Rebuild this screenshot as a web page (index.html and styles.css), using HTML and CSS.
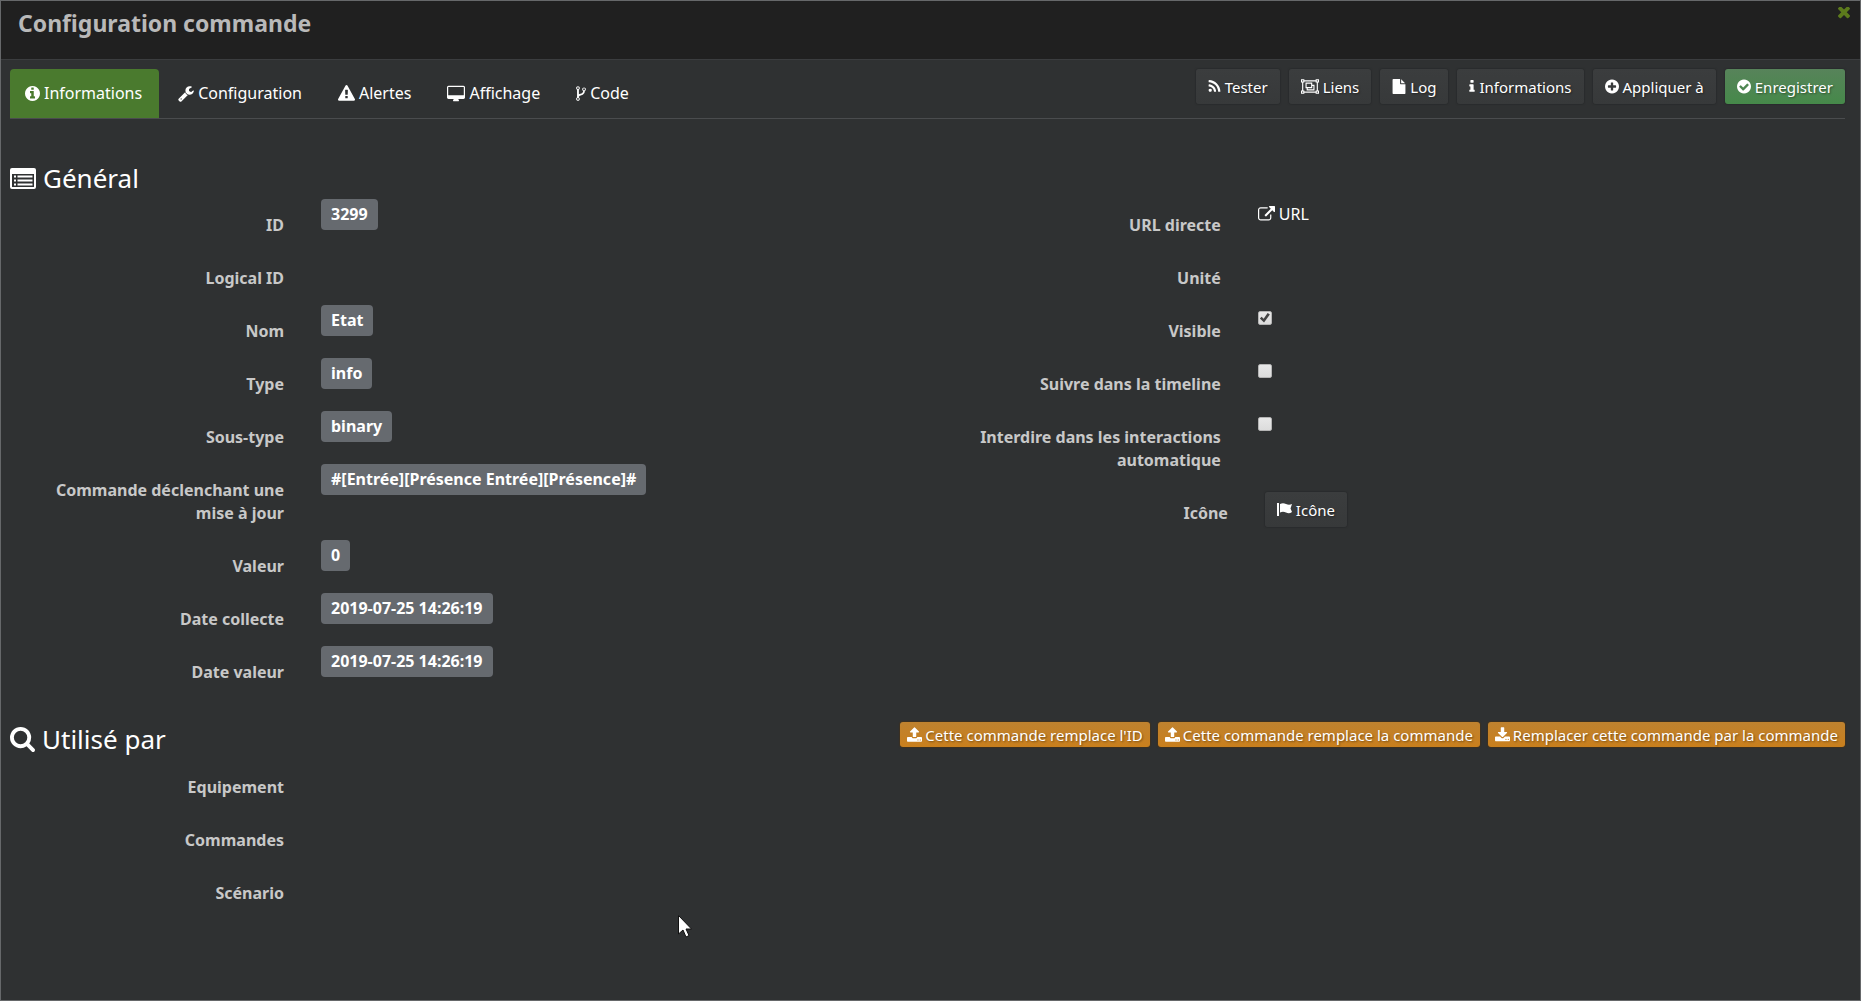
FILE: index.html
```html
<!DOCTYPE html>
<html lang="fr">
<head>
<meta charset="utf-8">
<meta name="viewport" content="width=device-width, initial-scale=1">
<title>Configuration commande</title>
<link rel="stylesheet" href="styles.css">
</head>
<body>
<svg class="sprite" aria-hidden="true">
  <symbol id="i-info-circle" viewBox="128 128 1536 1536"><path d="M1152 1376v-160q0-14-9-23t-23-9h-96v-512q0-14-9-23t-23-9h-320q-14 0-23 9t-9 23v160q0 14 9 23t23 9h96v320h-96q-14 0-23 9t-9 23v160q0 14 9 23t23 9h448q14 0 23-9t9-23zm-128-896v-160q0-14-9-23t-23-9h-192q-14 0-23 9t-9 23v160q0 14 9 23t23 9h192q14 0 23-9t9-23zm640 416q0 209-103 385.5t-279.5 279.5-385.5 103-385.5-103-279.5-279.5-103-385.5 103-385.5 279.5-279.5 385.5-103 385.5 103 279.5 279.5 103 385.5z"/></symbol>
  <symbol id="i-wrench" viewBox="64 0 1664 1792"><path d="M448 1472q0-26-19-45t-45-19-45 19-19 45 19 45 45 19 45-19 19-45zm644-420l-682 682q-37 37-90 37-52 0-91-37l-106-108q-38-36-38-90 0-53 38-91l681-681q39 98 114.5 173.5t173.5 114.5zm634-435q0 39-23 106-47 134-164.5 217.5t-258.5 83.5q-185 0-316.5-131.5t-131.5-316.5 131.5-316.5 316.5-131.5q58 0 121.5 16.5t107.5 46.5q16 11 16 28t-16 28l-293 169v224l193 107q5-3 79-48.5t135.5-81 70.5-35.5q15 0 23.5 10t8.5 25z"/></symbol>
  <symbol id="i-warning" viewBox="0 0 1792 1792"><path d="M1024 1375v-190q0-14-9.5-23.5t-22.5-9.5h-192q-13 0-22.5 9.5t-9.5 23.5v190q0 14 9.5 23.5t22.5 9.5h192q13 0 22.5-9.5t9.5-23.5zm-2-374l18-459q0-12-10-19-13-11-24-11h-220q-11 0-24 11-10 7-10 21l17 457q0 10 10 16.5t24 6.5h185q14 0 23.5-6.5t10.5-16.5zm-14-934l768 1408q35 63-2 126-17 29-46.5 46t-63.5 17h-1536q-34 0-63.5-17t-46.5-46q-37-63-2-126l768-1408q17-31 47-49t65-18 65 18 47 49z"/></symbol>
  <symbol id="i-desktop" viewBox="-64 0 1920 1664"><path d="M1728 992v-832q0-13-9.5-22.5t-22.5-9.5h-1600q-13 0-22.5 9.5t-9.5 22.5v832q0 13 9.5 22.5t22.5 9.5h1600q13 0 22.5-9.5t9.5-22.5zm128-832v1088q0 66-47 113t-113 47h-544q0 37 16 77.5t32 71 16 43.5q0 26-19 45t-45 19h-512q-26 0-45-19t-19-45q0-14 16-44t32-70 16-78h-544q-66 0-113-47t-47-113v-1088q0-66 47-113t113-47h1600q66 0 113 47t47 113z"/></symbol>
  <symbol id="i-fork" viewBox="384 0 1024 1792"><path d="M672 1472q0-40-28-68t-68-28-68 28-28 68 28 68 68 28 68-28 28-68zm0-1152q0-40-28-68t-68-28-68 28-28 68 28 68 68 28 68-28 28-68zm640 128q0-40-28-68t-68-28-68 28-28 68 28 68 68 28 68-28 28-68zm96 0q0 52-26 96.5t-70 69.5q-2 287-226 414-67 38-203 81-128 40-169.5 71t-41.5 100v26q44 25 70 69.5t26 96.5q0 80-56 136t-136 56-136-56-56-136q0-52 26-96.5t70-69.5v-820q-44-25-70-69.5t-26-96.5q0-80 56-136t136-56 136 56 56 136q0 52-26 96.5t-70 69.5v497q54-26 154-57 55-17 87.5-29.5t70.5-31 59-39.5 40.5-51 28-69.5 8.5-91.5q-44-25-70-69.5t-26-96.5q0-80 56-136t136-56 136 56 56 136z"/></symbol>
  <symbol id="i-rss" viewBox="192 0 1408 1792"><path d="M576 1344q0 80-56 136t-136 56-136-56-56-136 56-136 136-56 136 56 56 136zm512 123q2 28-17 48-18 21-47 21h-135q-25 0-43-16.5t-20-41.5q-22-229-184.5-391.5t-391.5-184.5q-25-2-41.5-20t-16.5-43v-135q0-29 21-47 17-17 43-17h5q160 13 306 80.5t259 181.5q114 113 181.5 259t80.5 306zm512 2q2 27-18 47-18 20-46 20h-143q-26 0-44.5-17.5t-19.5-42.5q-12-215-101-408.5t-231.5-336-336-231.5-408.5-102q-25-1-42.5-19.5t-17.5-43.5v-143q0-28 20-46 18-18 44-18h3q262 13 501.5 120t425.5 294q187 186 294 425.5t120 501.5z"/></symbol>
  <symbol id="i-group" viewBox="0 128 2048 1664"><path fill-rule="evenodd" d="M0 128h384v128h1280v-128h384v384h-128v896h128v384h-384v-128h-1280v128h-384v-384h128v-896h-128zM384 384v128h-128v896h128v128h1280v-128h128v-896h-128v-128zM128 256v128h128v-128zM1792 256v128h128v-128zM128 1536v128h128v-128zM1792 1536v128h128v-128zM512 512h768v256h256v640h-896v-256h-128zM640 640v384h512v-384zM1280 896v256h-512v128h640v-384z"/></symbol>
  <symbol id="i-file" viewBox="128 0 1536 1792"><path d="M1152 512v-472q22 14 36 28l408 408q14 14 28 36h-472zm-128 32q0 40 28 68t68 28h544v1056q0 40-28 68t-68 28h-1344q-40 0-68-28t-28-68v-1600q0-40 28-68t68-28h800v544z"/></symbol>
  <symbol id="i-info" viewBox="576 0 640 1792"><path d="M1216 1344v128q0 26-19 45t-45 19h-512q-26 0-45-19t-19-45v-128q0-26 19-45t45-19h64v-384h-64q-26 0-45-19t-19-45v-128q0-26 19-45t45-19h384q26 0 45 19t19 45v576h64q26 0 45 19t19 45zm-128-1152v192q0 26-19 45t-45 19h-256q-26 0-45-19t-19-45v-192q0-26 19-45t45-19h256q26 0 45 19t19 45z"/></symbol>
  <symbol id="i-plus-circle" viewBox="128 128 1536 1536"><path d="M1344 960v-128q0-26-19-45t-45-19h-256v-256q0-26-19-45t-45-19h-128q-26 0-45 19t-19 45v256h-256q-26 0-45 19t-19 45v128q0 26 19 45t45 19h256v256q0 26 19 45t45 19h128q26 0 45-19t19-45v-256h256q26 0 45-19t19-45zm320-64q0 209-103 385.5t-279.5 279.5-385.5 103-385.5-103-279.5-279.5-103-385.5 103-385.5 279.5-279.5 385.5-103 385.5 103 279.5 279.5 103 385.5z"/></symbol>
  <symbol id="i-check-circle" viewBox="128 128 1536 1536"><path d="M1412 734q0-28-18-46l-91-90q-19-19-45-19t-45 19l-408 407-226-226q-19-19-45-19t-45 19l-91 90q-18 18-18 46 0 27 18 45l362 362q19 19 45 19 27 0 46-19l543-543q18-18 18-45zm252 162q0 209-103 385.5t-279.5 279.5-385.5 103-385.5-103-279.5-279.5-103-385.5 103-385.5 279.5-279.5 385.5-103 385.5 103 279.5 279.5 103 385.5z"/></symbol>
  <symbol id="i-times" viewBox="302 434 1188 1188"><path d="M1490 1322q0 40-28 68l-136 136q-28 28-68 28t-68-28l-294-294-294 294q-28 28-68 28t-68-28l-136-136q-28-28-28-68t28-68l294-294-294-294q-28-28-28-68t28-68l136-136q28-28 68-28t68 28l294 294 294-294q28-28 68-28t68 28l136 136q28 28 28 68t-28 68l-294 294 294 294q28 28 28 68z"/></symbol>
  <symbol id="i-search" viewBox="64 128 1664 1664"><path d="M1216 832q0-185-131.5-316.5t-316.5-131.5-316.5 131.5-131.5 316.5 131.5 316.5 316.5 131.5 316.5-131.5 131.5-316.5zm512 832q0 52-38 90t-90 38q-54 0-90-38l-343-342q-179 124-399 124-143 0-273.5-55.5t-225-150-150-225-55.5-273.5 55.5-273.5 150-225 225-150 273.5-55.5 273.5 55.5 225 150 150 225 55.5 273.5q0 220-124 399l343 343q37 37 37 90z"/></symbol>
  <symbol id="i-external" viewBox="0 0 1792 1792"><path d="M1408 928v320q0 119-84.5 203.5t-203.5 84.5h-832q-119 0-203.5-84.5t-84.5-203.5v-832q0-119 84.5-203.5t203.5-84.5h704q14 0 23 9t9 23v64q0 14-9 23t-23 9h-704q-66 0-113 47t-47 113v832q0 66 47 113t113 47h832q66 0 113-47t47-113v-320q0-14 9-23t23-9h64q14 0 23 9t9 23zm384-864v512q0 26-19 45t-45 19-45-19l-176-176-652 652q-10 10-23 10t-23-10l-114-114q-10-10-10-23t10-23l652-652-176-176q-19-19-19-45t19-45 45-19h512q26 0 45 19t19 45z"/></symbol>
  <symbol id="i-upload" viewBox="64 64 1664 1600"><path d="M1344 1472q0-26-19-45t-45-19-45 19-19 45 19 45 45 19 45-19 19-45zm256 0q0-26-19-45t-45-19-45 19-19 45 19 45 45 19 45-19 19-45zm128-224v320q0 40-28 68t-68 28h-1472q-40 0-68-28t-28-68v-320q0-40 28-68t68-28h427q21 56 70.5 92t110.5 36h256q61 0 110.5-36t70.5-92h427q40 0 68 28t28 68zm-325-648q-17 40-59 40h-256v448q0 26-19 45t-45 19h-256q-26 0-45-19t-19-45v-448h-256q-42 0-59-40-17-39 14-69l448-448q18-19 45-19t45 19l448 448q31 30 14 69z"/></symbol>
  <symbol id="i-download" viewBox="64 0 1664 1600"><path d="M1344 1344q0-26-19-45t-45-19-45 19-19 45 19 45 45 19 45-19 19-45zm256 0q0-26-19-45t-45-19-45 19-19 45 19 45 45 19 45-19 19-45zm128-224v320q0 40-28 68t-68 28h-1472q-40 0-68-28t-28-68v-320q0-40 28-68t68-28h465l135 136q58 56 136 56t136-56l136-136h464q40 0 68 28t28 68zm-325-569q17 41-14 70l-448 448q-18 19-45 19t-45-19l-448-448q-31-29-14-70 17-39 59-39h256v-448q0-26 19-45t45-19h256q26 0 45 19t19 45v448h256q42 0 59 39z"/></symbol>
  <symbol id="i-flag" viewBox="0 0 15 15"><path d="M0 1h2v13H0zM3 2c2-1 4-1 6 0s4 1 6 0l-1.500 4.500L15 10c-2 1.500-4 1.500-6 .500s-4-1-6 0z"/></symbol>
  <symbol id="i-list" viewBox="0 0 26 21"><path fill-rule="evenodd" d="M2 0h22q2 0 2 2v17q0 2-2 2H2q-2 0-2-2V2q0-2 2-2zM2 6v12.500q0 .500.500.500h21q.500 0 .500-.500V6zM4 7.500h2v2H4zM7.500 7.500h15v2h-15zM4 11.500h2v2H4zM7.500 11.500h15v2h-15zM4 15.500h2v2H4zM7.500 15.500h15v2h-15z"/></symbol>
</svg>

<main class="dialog">
  <header class="titlebar">
    <h1 class="title">Configuration commande</h1>
    <button class="close" type="button" aria-label="Fermer"><svg><use href="#i-times"/></svg></button>
  </header>

  <div class="content">
    <div class="toolbar">
      <nav class="tabs">
        <a class="tab tab-active" href="#informations"><svg class="icon w15"><use href="#i-info-circle"/></svg>Informations</a>
        <a class="tab" href="#configuration"><svg class="icon w16"><use href="#i-wrench"/></svg>Configuration</a>
        <a class="tab" href="#alertes"><svg class="icon w17"><use href="#i-warning"/></svg>Alertes</a>
        <a class="tab" href="#affichage"><svg class="icon w18"><use href="#i-desktop"/></svg>Affichage</a>
        <a class="tab" href="#code"><svg class="icon w10"><use href="#i-fork"/></svg>Code</a>
      </nav>
      <div class="actions">
        <button class="btn" type="button"><svg class="icon w13"><use href="#i-rss"/></svg>Tester</button>
        <button class="btn" type="button"><svg class="icon w18"><use href="#i-group"/></svg>Liens</button>
        <button class="btn" type="button"><svg class="icon w14"><use href="#i-file"/></svg>Log</button>
        <button class="btn" type="button"><svg class="icon w6"><use href="#i-info"/></svg>Informations</button>
        <button class="btn" type="button"><svg class="icon w14"><use href="#i-plus-circle"/></svg>Appliquer à</button>
        <button class="btn btn-success" type="button"><svg class="icon w14"><use href="#i-check-circle"/></svg>Enregistrer</button>
      </div>
    </div>

    <section id="informations">
      <h2 class="legend legend-general"><svg class="legend-icon"><use href="#i-list"/></svg>Général</h2>
      <div class="columns">
        <div>
          <div class="row"><span class="label">ID</span><span class="badge">3299</span></div>
          <div class="row"><span class="label">Logical ID</span></div>
          <div class="row"><span class="label">Nom</span><span class="badge">Etat</span></div>
          <div class="row"><span class="label">Type</span><span class="badge">info</span></div>
          <div class="row"><span class="label">Sous-type</span><span class="badge">binary</span></div>
          <div class="row"><span class="label">Commande déclenchant une mise à jour</span><span class="badge">#[Entrée][Présence Entrée][Présence]#</span></div>
          <div class="row"><span class="label">Valeur</span><span class="badge">0</span></div>
          <div class="row"><span class="label">Date collecte</span><span class="badge">2019-07-25 14:26:19</span></div>
          <div class="row"><span class="label">Date valeur</span><span class="badge">2019-07-25 14:26:19</span></div>
        </div>
        <div>
          <div class="row"><span class="label">URL directe</span><a class="link" href="#url"><svg class="icon w17"><use href="#i-external"/></svg>URL</a></div>
          <div class="row"><span class="label">Unité</span></div>
          <div class="row"><label class="label" for="visible">Visible</label><input class="check" type="checkbox" id="visible" checked></div>
          <div class="row"><label class="label" for="timeline">Suivre dans la timeline</label><input class="check" type="checkbox" id="timeline"></div>
          <div class="row"><label class="label" for="interact">Interdire dans les interactions automatique</label><input class="check" type="checkbox" id="interact"></div>
          <div class="row row-icon"><span class="label">Icône</span><button class="btn" type="button"><svg class="icon w15"><use href="#i-flag"/></svg>Icône</button></div>
        </div>
      </div>
    </section>

    <section>
      <div class="used-head">
        <h2 class="legend"><svg class="legend-icon search"><use href="#i-search"/></svg>Utilisé par</h2>
        <div class="replace">
          <button class="btn btn-warning" type="button"><svg class="icon w15"><use href="#i-upload"/></svg>Cette commande remplace l'ID</button>
          <button class="btn btn-warning" type="button"><svg class="icon w15"><use href="#i-upload"/></svg>Cette commande remplace la commande</button>
          <button class="btn btn-warning" type="button"><svg class="icon w15"><use href="#i-download"/></svg>Remplacer cette commande par la commande</button>
        </div>
      </div>
      <div class="row"><span class="label">Equipement</span></div>
      <div class="row"><span class="label">Commandes</span></div>
      <div class="row"><span class="label">Scénario</span></div>
    </section>
  </div>
</main>
<svg class="cursor" viewBox="0 0 14 23" aria-hidden="true"><path d="M.500.500v18.500l4.500-4 3 7 3-1.500-3-6.500h5.500z" fill="#fff" stroke="#111"/></svg>
</body>
</html>
```
FILE: styles.css
```css
* {
  box-sizing: border-box;
}

body {
  margin: 0;
  background: #2f3132;
  color: #fff;
  font-family: "Noto Sans", "Open Sans", sans-serif;
  font-size: 16px;
  line-height: 23px;
}

.sprite {
  display: none;
}

.dialog {
  min-height: 100vh;
  border: 1px solid #66686a;
}

.titlebar {
  display: flex;
  justify-content: space-between;
  align-items: flex-start;
  height: 59px;
  padding: 6px 10px 0 17px;
  background: #202020;
  border-bottom: 1px solid #3b3d3f;
}

.title {
  margin: 0;
  font-size: 23px;
  line-height: 32px;
  font-weight: 700;
  color: #b9b9b9;
}

.close {
  display: flex;
  padding: 0;
  border: 0;
  background: none;
}

.close svg {
  width: 12px;
  height: 12px;
  fill: #5c7a1c;
}

.content {
  padding: 9px 15px 0 9px;
}

.toolbar {
  display: flex;
  justify-content: space-between;
  align-items: flex-start;
  border-bottom: 1px solid #4a4c4e;
}

.tabs {
  display: flex;
  gap: 4px;
}

.tab {
  display: flex;
  align-items: center;
  gap: 4px;
  height: 49px;
  padding: 0 17px 0 15px;
  color: #fff;
  text-decoration: none;
}

.tab-active {
  background: #4a7a2e;
  border-radius: 4px 4px 0 0;
}

.icon {
  height: 17px;
  fill: currentColor;
  flex: none;
}

.btn .icon {
  height: 15px;
}

.w6 { width: 6px; }
.w10 { width: 10px; }
.w13 { width: 13px; }
.w14 { width: 14px; }
.w15 { width: 15px; }
.w16 { width: 16px; }
.w17 { width: 17px; }
.w18 { width: 18px; }

.actions {
  display: flex;
  gap: 9px;
}

.replace {
  display: flex;
  gap: 8px;
}

.btn {
  display: flex;
  align-items: center;
  gap: 4px;
  height: 35px;
  padding: 0 12px;
  border: 0;
  border-radius: 3px;
  background: linear-gradient(#3b3d3e, #37393a);
  box-shadow: 0 0 1px 1px #2a2c2d;
  color: #fff;
  font-family: inherit;
  font-size: 15px;
  line-height: 22px;
  white-space: nowrap;
  text-shadow: 1px 1px 2px rgba(0, 0, 0, 0.4);
}

.btn-success {
  background: linear-gradient(#57835a, #46894a);
}

.btn-warning {
  gap: 3px;
  height: 25px;
  padding: 0 7px;
  background: linear-gradient(#bf822f, #c97f1d);
  box-shadow: 0 0 1px 1px #3d3120;
}

.legend {
  display: flex;
  align-items: center;
  gap: 7px;
  margin: 0;
  font-size: 26px;
  line-height: 38px;
  font-weight: 400;
}

.legend-general {
  margin: 40px 0 2px;
}

.legend-icon {
  width: 26px;
  height: 21px;
  fill: currentColor;
}

.legend-icon.search {
  width: 25px;
  height: 25px;
}

.columns {
  display: grid;
  grid-template-columns: 51% 1fr;
  column-gap: 1px;
}

.row {
  display: grid;
  grid-template-columns: 274px 1fr;
  column-gap: 37px;
  align-items: start;
  justify-items: start;
}

.row-icon {
  margin-left: 7px;
}

.row-icon .btn {
  margin-top: 5px;
}

.label {
  justify-self: end;
  padding: 15px 0 15px 24px;
  font-weight: 700;
  color: #c8c8c8;
  text-align: right;
}

.badge {
  padding: 4px 10px;
  border-radius: 4px;
  background: #666a6f;
  font-weight: 700;
}

.link {
  display: flex;
  align-items: center;
  gap: 4px;
  padding-top: 4px;
  color: #fff;
  text-decoration: none;
}

.check {
  appearance: none;
  width: 14px;
  height: 14px;
  margin: 6px 0 0;
  border: 1px solid #b4b4b4;
  border-radius: 2px;
  background: linear-gradient(#e8e8e8, #dcdcdc);
  display: grid;
  place-items: center;
}

.check:checked::before {
  content: "";
  width: 10px;
  height: 10px;
  background: #444;
  clip-path: polygon(0 55%, 18% 38%, 38% 58%, 78% 0, 100% 14%, 42% 96%);
}

.used-head {
  display: flex;
  justify-content: space-between;
  align-items: flex-start;
  margin: 23px 0 5px;
}

.used-head .legend {
  line-height: 34px;
}

.cursor {
  position: absolute;
  left: 678px;
  top: 915px;
  width: 14px;
  height: 23px;
  pointer-events: none;
}
```
